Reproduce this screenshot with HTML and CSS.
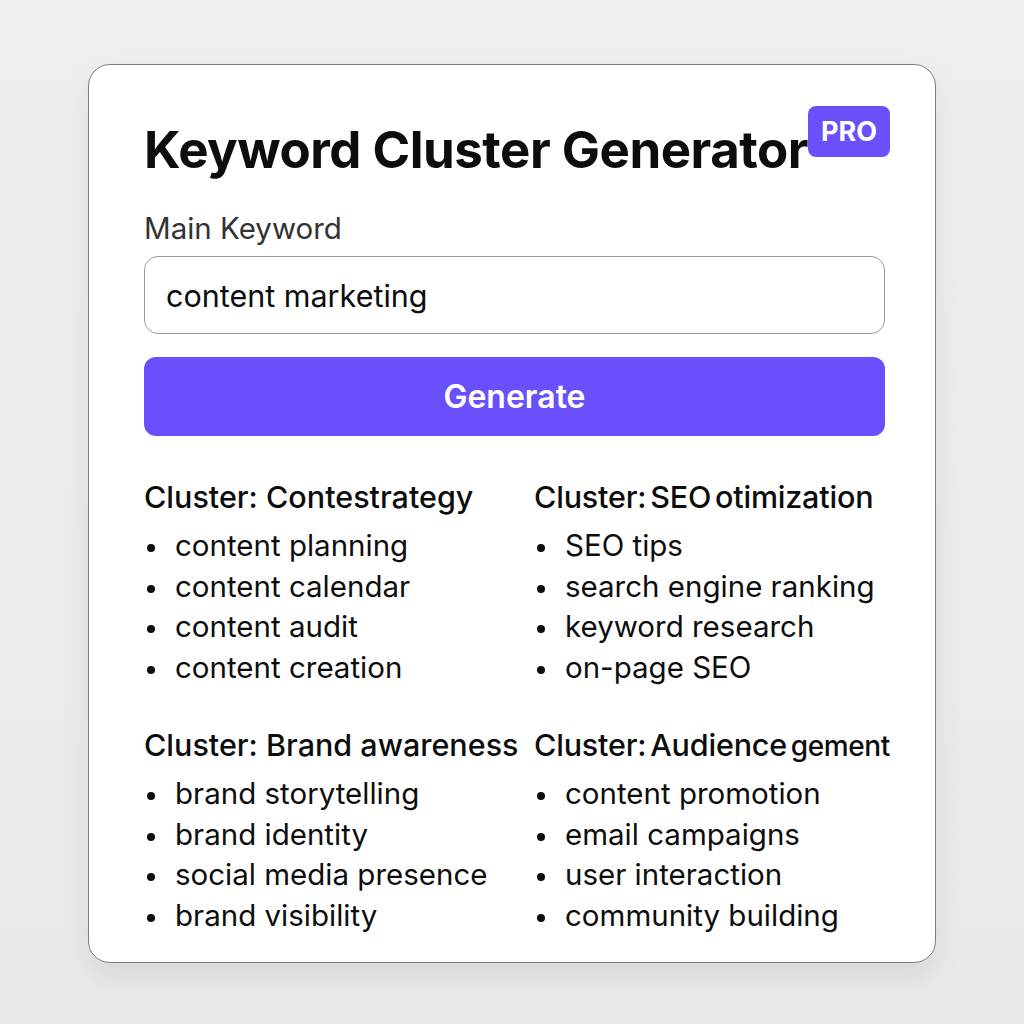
FILE: index.html
```html
<!DOCTYPE html>
<html lang="en">
<head>
  <meta charset="UTF-8">
  <meta name="viewport" content="width=device-width, initial-scale=1.0">
  <title>Keyword Cluster Generator</title>
  <link rel="stylesheet" href="styles.css">
</head>
<body>
  <div class="page">
    <div class="card">
      <div class="title-row">
        <h1 class="title">Keyword Cluster Generator</h1>
        <span class="badge">PRO</span>
      </div>
      <label class="label" for="keyword">Main Keyword</label>
      <input class="field" id="keyword" type="text" value="content marketing">
      <button class="generate">Generate</button>
      <div class="clusters">
        <div class="cluster">
          <h2>Cluster: Contestrategy</h2>
          <ul>
            <li>content planning</li>
            <li>content calendar</li>
            <li>content audit</li>
            <li>content creation</li>
          </ul>
        </div>
        <div class="cluster">
          <h2 class="tight">Cluster: SEO otimization</h2>
          <ul>
            <li>SEO tips</li>
            <li>search engine ranking</li>
            <li>keyword research</li>
            <li>on-page SEO</li>
          </ul>
        </div>
        <div class="cluster">
          <h2>Cluster: Brand awareness</h2>
          <ul>
            <li>brand storytelling</li>
            <li>brand identity</li>
            <li>social media presence</li>
            <li>brand visibility</li>
          </ul>
        </div>
        <div class="cluster">
          <h2 class="tight">Cluster: Audience <span class="small">gement</span></h2>
          <ul>
            <li>content promotion</li>
            <li>email campaigns</li>
            <li>user interaction</li>
            <li>community building</li>
          </ul>
        </div>
      </div>
    </div>
  </div>
</body>
</html>
```
FILE: styles.css
```css
* {
  box-sizing: border-box;
}
body {
  margin: 0;
  font-family: Inter, "Noto Sans", sans-serif;
  color: #0d0d0d;
}
.page {
  height: 1024px;
  padding-top: 64px;
  background: linear-gradient(180deg, #efefef 0%, #e9e9e9 100%);
}
.card {
  width: 848px;
  height: 899px;
  margin-left: 88px;
  padding: 41px 50px 0 55px;
  background: #fff;
  border: 1px solid #7d7d7d;
  border-radius: 22px;
  box-shadow: 0 14px 30px rgba(0, 0, 0, 0.08);
}
.title-row {
  display: flex;
  align-items: flex-start;
}
.title {
  flex-shrink: 0;
  margin: 14px 0 0;
  font-size: 51px;
  font-weight: 700;
  line-height: 60px;
  letter-spacing: -0.5px;
  white-space: nowrap;
}
.badge {
  flex-shrink: 0;
  width: 82px;
  height: 51px;
  background: #6b4ffb;
  color: #fff;
  font-size: 27px;
  font-weight: 700;
  border-radius: 8px;
  line-height: 51px;
  text-align: center;
}
.label {
  display: block;
  margin-top: 31px;
  font-size: 29.5px;
  color: #333;
  line-height: 34px;
}
.field {
  display: block;
  width: 100%;
  height: 78px;
  margin-top: 11px;
  padding: 0 21px;
  font-family: inherit;
  font-size: 30.5px;
  color: #0d0d0d;
  border: 1px solid #9a9a9a;
  border-radius: 14px;
  outline: none;
}
.generate {
  display: block;
  width: 100%;
  height: 79px;
  margin-top: 23px;
  border: none;
  border-radius: 12px;
  background: #6a4ffd;
  color: #fff;
  font-family: inherit;
  font-size: 32px;
  font-weight: 600;
}
.clusters {
  display: grid;
  grid-template-columns: 390px 1fr;
  row-gap: 38px;
  margin-top: 41px;
}
.cluster h2 {
  margin: 0;
  font-size: 30.5px;
  font-weight: 500;
  line-height: 40px;
  white-space: nowrap;
}
.cluster h2.tight {
  word-spacing: -4px;
  letter-spacing: -0.2px;
}
.cluster h2 .small {
  font-size: 28px;
  line-height: 1;
  letter-spacing: -0.4px;
}
.cluster ul {
  margin: 8px 0 0;
  padding: 0;
  list-style: none;
}
.cluster li {
  position: relative;
  padding-left: 31px;
  font-size: 29.5px;
  line-height: 40.5px;
}
.cluster li::before {
  content: "";
  position: absolute;
  left: 3px;
  top: 19px;
  width: 8px;
  height: 8px;
  border-radius: 50%;
  background: #0d0d0d;
}
```
